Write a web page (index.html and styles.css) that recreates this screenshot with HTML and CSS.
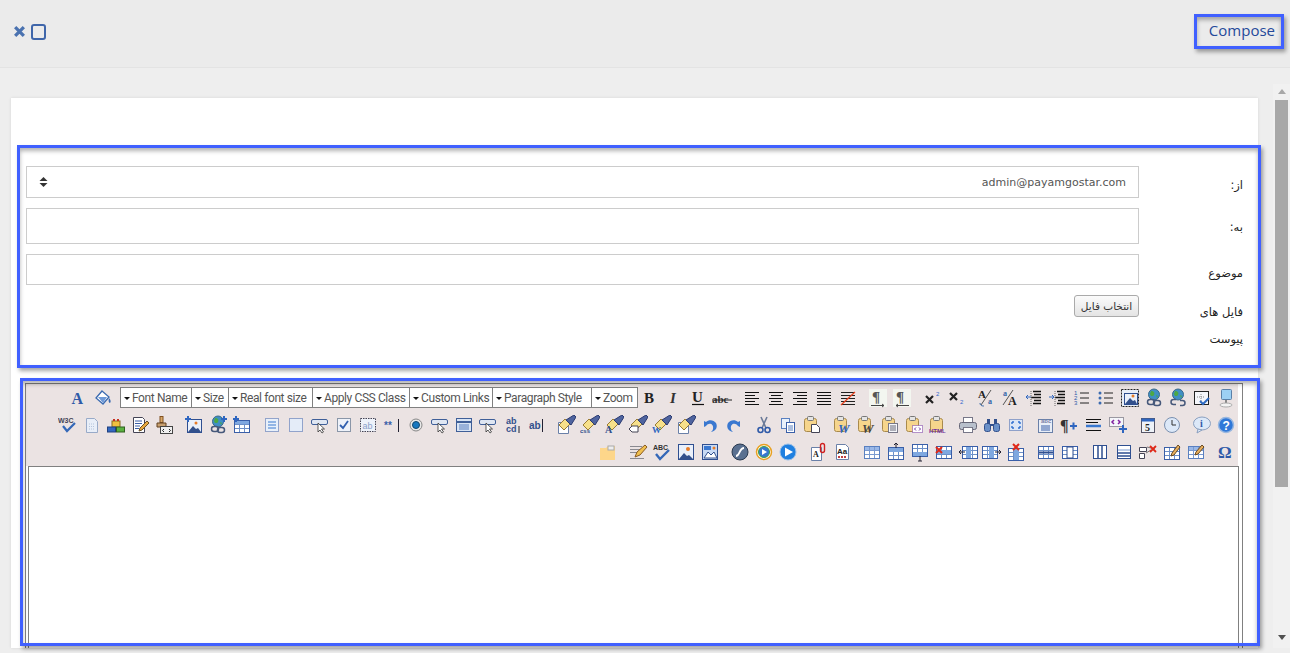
FILE: index.html
```html
<!DOCTYPE html>
<html>
  <head>
    <meta charset="UTF-8" />
    <title>Compose</title>
    <link rel="stylesheet" href="styles.css">
  </head>
  <body>
    <svg class="sprite" xmlns="http://www.w3.org/2000/svg">
      <defs>
        <g id="brush"><path d="M2 11l6-6 5 5-6 6z" fill="#f7e08a" stroke="#9a7c34"/><path d="M9 6l8-5 2 2-5 8z" fill="#4f649f" stroke="#2a3a70"/></g>
        <g id="clip"><rect x="2.5" y="3.5" width="12" height="13" rx="2" fill="#f6d58c" stroke="#a98a4c"/><rect x="5.5" y="1.5" width="6" height="4" rx="1" fill="#e4e4e4" stroke="#777"/></g>
        <g id="page"><path d="M4.5 2.5h8l3 3v12h-11z" fill="#f2f6fc" stroke="#8aa0c8"/><path d="M7 8h6M7 10.5h6M7 13h6" stroke="#a8bcdc"/></g>
        <g id="grid"><rect x="2.5" y="4.5" width="15" height="12" fill="#fff" stroke="#3a5fa8"/><path d="M3 8.5h14M3 12.5h14M7.5 5v11M12.5 5v11" stroke="#6d90c8"/></g>
        <g id="globe"><circle cx="9" cy="6.5" r="5.5" fill="#3f8fc4" stroke="#3a6a8c"/><path d="M6 3c3 0 4 2 3 4s-4 1-4-1M11 7l2 1-1 2z" fill="#4da844"/></g>
        <g id="cursor"><path d="M10 8v9l2-2 2 3 1.5-1-2-3h3z" fill="#fff" stroke="#333" stroke-width=".8"/></g>
        <g id="btn"><rect x="1.5" y="4.5" width="16" height="5" rx="1.5" fill="#dfe6f2" stroke="#3f5f98"/><use href="#cursor" x="-2" y="0"/></g>
        <symbol id="font" viewBox="0 0 20 20"><text x="2.500" y="16" class="t-serif t-16" fill="#2f5aa8">A</text></symbol>
        <symbol id="bucket" viewBox="0 0 20 20"><path d="M9 3l7 6-6 7-7-6z" fill="#fff" stroke="#3a6ab0" stroke-width="1.3"/><path d="M5 9h9l-4 6z" fill="#6f9ad8"/><path d="M16 10c2 2 2 4 1 5-1 0-2-2-1-5z" fill="#3a6ab0"/></symbol>
        <symbol id="bold" viewBox="0 0 20 20"><text x="4" y="15" class="t-serif t-15" fill="#222">B</text></symbol>
        <symbol id="italic" viewBox="0 0 20 20"><text x="6" y="15" class="t-serif t-15 t-it" fill="#333">I</text></symbol>
        <symbol id="under" viewBox="0 0 20 20"><text x="4" y="14" class="t-serif t-15" fill="#222">U</text><path d="M4 16.5h12" stroke="#111" stroke-width="1.2"/></symbol>
        <symbol id="strike" viewBox="0 0 20 20"><text x="0" y="15" class="t-serif t-11" fill="#333">abc</text><path d="M0 12h20" stroke="#222"/></symbol>
        <symbol id="aleft" viewBox="0 0 20 20"><path d="M3 4.5h14M3 7.5h10M3 10.5h14M3 13.5h10M3 16.5h14" stroke="#111"/></symbol>
        <symbol id="acenter" viewBox="0 0 20 20"><path d="M3 4.5h14M5 7.5h10M3 10.5h14M5 13.5h10M3 16.5h14" stroke="#111"/></symbol>
        <symbol id="aright" viewBox="0 0 20 20"><path d="M3 4.5h14M7 7.5h10M3 10.5h14M7 13.5h10M3 16.5h14" stroke="#111"/></symbol>
        <symbol id="ajust" viewBox="0 0 20 20"><path d="M3 4.5h14M3 7.5h14M3 10.5h14M3 13.5h14M3 16.5h14" stroke="#111"/></symbol>
        <symbol id="anone" viewBox="0 0 20 20"><path d="M3 4.5h14M3 7.5h14M3 10.5h14M3 13.5h14M3 16.5h14" stroke="#222"/><path d="M3 17L17 4" stroke="#e8401c" stroke-width="1.2"/></symbol>
        <symbol id="pil-l" viewBox="0 0 20 20"><rect x="1" y="1" width="18" height="18" fill="#f3f6f0"/><text x="4" y="14" class="t-serif t-15" fill="#555">¶</text><path d="M3 17.5h13M14 16l2 1.5-2 1.500" stroke="#444" fill="none"/></symbol>
        <symbol id="pil-r" viewBox="0 0 20 20"><rect x="1" y="1" width="18" height="18" fill="#f3f6f0"/><text x="4" y="14" class="t-serif t-15" fill="#555">¶</text><path d="M4 17.5h13M6 16l-2 1.5 2 1.500" stroke="#444" fill="none"/></symbol>
        <symbol id="sup" viewBox="0 0 20 20"><path d="M4 8l7 7M11 8l-7 7" stroke="#222" stroke-width="2.2"/><text x="14" y="8" class="t-sans t-6" fill="#36c">2</text></symbol>
        <symbol id="sub" viewBox="0 0 20 20"><path d="M4 5l7 7M11 5l-7 7" stroke="#222" stroke-width="2.2"/><text x="14" y="16" class="t-sans t-6" fill="#36c">2</text></symbol>
        <symbol id="fdown" viewBox="0 0 20 20"><text x="2" y="10" class="t-serif t-11" fill="#222">A</text><path d="M15 2L5 17" stroke="#555"/><text x="12" y="16" class="t-serif t-8" fill="#36a">a</text><path d="M4 15c0 3 3 3 4 3" stroke="#36a" fill="none"/></symbol>
        <symbol id="fup" viewBox="0 0 20 20"><text x="3" y="8" class="t-serif t-8" fill="#36a">a</text><path d="M13 2L3 17" stroke="#555"/><text x="8" y="17" class="t-serif t-12" fill="#222">A</text></symbol>
        <symbol id="outd" viewBox="0 0 20 20"><path d="M9 3.500h8M10 6.500h7M7 9.500h10M10 12.500h7M9 15.500h8" stroke="#111" stroke-width="1.5"/><path d="M2 9h5M4 7L2 9l2 2" stroke="#2f66c0" fill="none"/><path d="M7 3v15" stroke="#666" stroke-dasharray="1 1"/></symbol>
        <symbol id="ind" viewBox="0 0 20 20"><path d="M9 3.500h8M10 6.500h7M7 9.500h10M10 12.500h7M9 15.500h8" stroke="#111" stroke-width="1.5"/><path d="M1 9h5M4 7l2 2-2 2" stroke="#2f66c0" fill="none"/><path d="M7 3v15" stroke="#666" stroke-dasharray="1 1"/></symbol>
        <symbol id="ol" viewBox="0 0 20 20"><text x="2" y="7" class="t-sans t-6" fill="#2f5aa8">1</text><text x="2" y="12" class="t-sans t-6" fill="#2f5aa8">2</text><text x="2" y="17" class="t-sans t-6" fill="#2f5aa8">3</text><path d="M8 5h9M8 10h9M8 15h9" stroke="#222"/></symbol>
        <symbol id="ul" viewBox="0 0 20 20"><circle cx="4" cy="5" r="1.5" fill="#3a6ab0"/><circle cx="4" cy="10" r="1.5" fill="#3a6ab0"/><circle cx="4" cy="15" r="1.5" fill="#3a6ab0"/><path d="M8 5h9M8 10h9M8 15h9" stroke="#222"/></symbol>
        <symbol id="imgf" viewBox="0 0 20 20"><rect x="1.5" y="1.5" width="17" height="17" fill="#e8eef8" stroke="#222" stroke-dasharray="2 1"/><rect x="4.5" y="5.5" width="13" height="11" fill="#eaf0fa" stroke="#2f4f90"/><circle cx="13" cy="8" r="1.5" fill="#e87c28"/><path d="M5 16l5-6 3 3 2-1 2 4z" fill="#32508c"/></symbol>
        <symbol id="link" viewBox="0 0 20 20"><use href="#globe" x="1"/><rect x="3.5" y="11.5" width="7" height="5" rx="2.5" fill="none" stroke="#46587a" stroke-width="1.5"/><rect x="9.5" y="12.5" width="7" height="5" rx="2.5" fill="none" stroke="#46587a" stroke-width="1.5"/></symbol>
        <symbol id="unlink" viewBox="0 0 20 20"><use href="#globe" x="1"/><path d="M8 16.5H5.5a2.5 2.5 0 0 1 0-5H8M12 12.5h2.5a2.5 2.5 0 0 1 0 5H12" fill="none" stroke="#46587a" stroke-width="1.5"/></symbol>
        <symbol id="selall" viewBox="0 0 20 20"><rect x="2.5" y="3.5" width="14" height="13" fill="#f4f6fa" stroke="#222"/><path d="M5 9h8M9 6v8" stroke="#888" stroke-dasharray="1 1"/><path d="M8 13l3 3 6-6" stroke="#2f6ac0" stroke-width="2" fill="none"/></symbol>
        <symbol id="screen" viewBox="0 0 20 20"><rect x="5.5" y="1.5" width="10" height="10" rx="1" fill="#9cd0f4" stroke="#5a80a8"/><path d="M10 12v3" stroke="#888" stroke-width="2"/><ellipse cx="10" cy="17" rx="6" ry="2" fill="#f4f4f4" stroke="#aaa"/></symbol>
        <symbol id="w3c" viewBox="0 0 20 20"><text x="0" y="8" class="t-sans t-7 t-b" fill="#445">W3C</text><path d="M5 11l4 5 8-8" stroke="#3468b8" stroke-width="2.2" fill="none"/></symbol>
        <symbol id="newdoc" viewBox="0 0 20 20"><path d="M4.5 3.5h8l3 3v11h-11z" fill="#e8eef8" stroke="#98aac8"/><path d="M7 9h6M7 11.5h6M7 14h6" stroke="#b4c4dc" stroke-dasharray="1 1"/></symbol>
        <symbol id="lego" viewBox="0 0 20 20"><rect x="6" y="6" width="8" height="6" fill="#f0c040" stroke="#8a6a20"/><path d="M8 4v2M12 4v2" stroke="#c83020" stroke-width="2"/><rect x="1.5" y="12" width="8" height="5" fill="#3268c0" stroke="#204080"/><rect x="10.5" y="12" width="8" height="5" fill="#5ab040" stroke="#306020"/></symbol>
        <symbol id="editdoc" viewBox="0 0 20 20"><path d="M3.5 2.5h9l2 2v13h-11z" fill="#fff" stroke="#445"/><path d="M5 6h7M5 8.5h7M5 11h5M5 13.5h4" stroke="#3a5fa8"/><path d="M9 16l1-3 7-7 2 2-7 7z" fill="#e8a840" stroke="#6a5020"/></symbol>
        <symbol id="brushtag" viewBox="0 0 20 20"><rect x="6" y="1.5" width="3" height="6" fill="#d8a868" stroke="#805020"/><path d="M3 8h9v4H3z" fill="#c8a070" stroke="#604020"/><rect x="6.5" y="11.5" width="12" height="7" fill="#f0f0f0" stroke="#444"/><path d="M10 14l-1.5 1.5L10 17M15 14l1.5 1.5L15 17" stroke="#222" fill="none"/></symbol>
        <symbol id="imgplus" viewBox="0 0 20 20"><rect x="3.5" y="4.5" width="14" height="13" fill="#eaf0fa" stroke="#2f4f90"/><circle cx="12" cy="8" r="1.5" fill="#e87c28"/><path d="M4 17l5-6 3 3 2-1 3 4z" fill="#32508c"/><path d="M1 4h6M4 1v6" stroke="#2f66c0" stroke-width="2"/></symbol>
        <symbol id="linkplus" viewBox="0 0 20 20"><use href="#link"/><path d="M13 4h6M16 1v6" stroke="#2f66c0" stroke-width="2"/></symbol>
        <symbol id="tblplus" viewBox="0 0 20 20"><use href="#grid" y="1"/><rect x="3" y="6" width="14" height="3" fill="#7fa8e0"/><path d="M1 4h6M4 1v6" stroke="#2f66c0" stroke-width="2"/></symbol>
        <symbol id="fdiv" viewBox="0 0 20 20"><rect x="3.5" y="3.5" width="13" height="13" fill="#e8f0fa" stroke="#3a5fa8" stroke-dasharray="1 1"/><path d="M6 7h8M6 10h8M6 13h8" stroke="#3a7ad0"/></symbol>
        <symbol id="fbox" viewBox="0 0 20 20"><rect x="3.5" y="3.5" width="13" height="13" fill="#e4ecf8" stroke="#3a5fa8" stroke-dasharray="1 1"/></symbol>
        <symbol id="fbtn" viewBox="0 0 20 20"><use href="#btn"/></symbol>
        <symbol id="fcheck" viewBox="0 0 20 20"><rect x="3.5" y="3.5" width="13" height="13" fill="#eef2fa" stroke="#8a96a8"/><path d="M6 10l3 3 5-7" stroke="#3260b0" stroke-width="1.8" fill="none"/></symbol>
        <symbol id="fab" viewBox="0 0 20 20"><rect x="2.5" y="3.5" width="15" height="13" fill="#eef2fa" stroke="#445" stroke-dasharray="1.5 1"/><text x="4.5" y="14" class="t-sans t-9" fill="#8aa0c8">ab</text></symbol>
        <symbol id="fpass" viewBox="0 0 20 20"><text x="2" y="14" class="t-sans t-10 t-b" fill="#3a5fa8">**</text><path d="M16.5 4v13" stroke="#223"/></symbol>
        <symbol id="radio" viewBox="0 0 20 20"><circle cx="10" cy="10" r="6" fill="#e8e8e8" stroke="#888"/><circle cx="10" cy="10" r="3.5" fill="#1878c0" stroke="#104870"/></symbol>
        <symbol id="flist" viewBox="0 0 20 20"><rect x="2.5" y="3.5" width="15" height="13" fill="#d8e4f4" stroke="#3f5f98"/><path d="M3 7h14" stroke="#3f5f98" stroke-width="2"/><path d="M5 10h10M5 12h10M5 14h10" stroke="#5a80c0"/></symbol>
        <symbol id="tarea" viewBox="0 0 20 20"><text x="4" y="9" class="t-sans t-9 t-b" fill="#32508c">ab</text><text x="4" y="17" class="t-sans t-9 t-b" fill="#32508c">cd</text><path d="M17 11v7" stroke="#223"/></symbol>
        <symbol id="tinput" viewBox="0 0 20 20"><text x="3" y="14" class="t-sans t-10 t-b" fill="#32508c">ab</text><path d="M16.5 4v13" stroke="#223"/></symbol>
        <symbol id="brdoc" viewBox="0 0 20 20"><path d="M2.5 7.5h10v11h-10z" fill="#fff" stroke="#6a80a8"/><use href="#brush" x="1" y="-1"/></symbol>
        <symbol id="brcss" viewBox="0 0 20 20"><use href="#brush" x="1" y="-1"/><text x="0" y="18" class="t-sans t-6 t-b" fill="#32508c">css</text></symbol>
        <symbol id="bra" viewBox="0 0 20 20"><use href="#brush" x="1" y="-1"/><text x="1" y="18" class="t-serif t-10" fill="#32508c">A</text></symbol>
        <symbol id="brs" viewBox="0 0 20 20"><use href="#brush" x="1" y="-1"/><path d="M1 14l3-3h6v6H4z" fill="#fff" stroke="#445"/></symbol>
        <symbol id="brw" viewBox="0 0 20 20"><use href="#brush" x="1" y="-1"/><text x="0" y="18" class="t-serif t-9 t-b" fill="#2f66c0">W</text></symbol>
        <symbol id="undo" viewBox="0 0 20 20"><path d="M4 6v6l2-1c3-4 8-2 7 3-.3 1.5-1 2-2 3 5-1 7-5 5-9-2-3-7-4-10-1z" fill="#3a78d0"/></symbol>
        <symbol id="redo" viewBox="0 0 20 20"><path d="M16 6v6l-2-1c-3-4-8-2-7 3 .3 1.5 1 2 2 3-5-1-7-5-5-9 2-3 7-4 10-1z" fill="#3a78d0"/></symbol>
        <symbol id="cut" viewBox="0 0 20 20"><path d="M7 2l5 11M13 2L8 13" stroke="#6a7a98" stroke-width="1.6"/><circle cx="6.5" cy="15" r="2.5" fill="none" stroke="#2f5aa8" stroke-width="1.6"/><circle cx="13.5" cy="15" r="2.5" fill="none" stroke="#2f5aa8" stroke-width="1.6"/></symbol>
        <symbol id="copy" viewBox="0 0 20 20"><rect x="3.5" y="3.5" width="8" height="10" fill="#e8f0fa" stroke="#5a80c0"/><rect x="8.5" y="7.5" width="8" height="10" fill="#fff" stroke="#3a5fa8"/><path d="M10 11h5M10 13h5M10 15h5" stroke="#5a80c0"/></symbol>
        <symbol id="paste" viewBox="0 0 20 20"><use href="#clip"/><path d="M9.5 9.5h5l3 3v5h-8z" fill="#fff" stroke="#445"/></symbol>
        <symbol id="pastew" viewBox="0 0 20 20"><use href="#clip"/><text x="6" y="18" class="t-serif t-13 t-it" fill="#2f66c0">W</text></symbol>
        <symbol id="pastewg" viewBox="0 0 20 20"><use href="#clip"/><text x="6" y="18" class="t-serif t-13 t-it" fill="#444">W</text></symbol>
        <symbol id="pastet" viewBox="0 0 20 20"><use href="#clip"/><rect x="8.5" y="8.5" width="9" height="9" fill="#f4f6fa" stroke="#778"/><path d="M10 11h6M10 13h6M10 15h6" stroke="#667"/></symbol>
        <symbol id="pastec" viewBox="0 0 20 20"><use href="#clip"/><rect x="8.5" y="10.5" width="10" height="7" fill="#fff" stroke="#7030a0" stroke-dasharray="1 1"/><path d="M12 12.5l-1.5 1.5 1.5 1.5M15 12.5l1.5 1.5-1.5 1.5" stroke="#7030a0" fill="none"/></symbol>
        <symbol id="pasteh" viewBox="0 0 20 20"><use href="#clip"/><text x="1" y="18" class="t-sans t-6 t-b" fill="#7030a0">HTML</text></symbol>
        <symbol id="print" viewBox="0 0 20 20"><rect x="5.5" y="2.5" width="9" height="6" fill="#fff" stroke="#778"/><rect x="1.5" y="7.5" width="17" height="7" rx="2" fill="#b8c0cc" stroke="#667"/><rect x="5.5" y="12.5" width="9" height="5" fill="#fff" stroke="#778"/></symbol>
        <symbol id="find" viewBox="0 0 20 20"><rect x="2.5" y="8.5" width="6" height="8" rx="2" fill="#6a90c8" stroke="#32508c"/><rect x="11.5" y="8.5" width="6" height="8" rx="2" fill="#6a90c8" stroke="#32508c"/><path d="M5 4h3v5H5zM12 4h3v5h-3z" fill="#32508c"/><path d="M8 10h4" stroke="#32508c" stroke-width="2"/></symbol>
        <symbol id="full" viewBox="0 0 20 20"><rect x="3.5" y="4.5" width="13" height="11" fill="#dce6f6" stroke="#3a5fa8" stroke-dasharray="1 1"/><path d="M6 7h2M6 7v2M14 7h-2M14 7v2M6 13h2M6 13v-2M14 13h-2M14 13v-2" stroke="#3070d0" stroke-width="1.4"/></symbol>
        <symbol id="note" viewBox="0 0 20 20"><rect x="2.5" y="4.5" width="14" height="13" fill="#e8eef8" stroke="#6a80a8"/><text x="5" y="8" class="t-sans t-6 t-b" fill="#7a80a8">abc</text><path d="M5 11h9M5 13h9M5 15h9" stroke="#3a5fa8"/></symbol>
        <symbol id="pilplus" viewBox="0 0 20 20"><text x="0" y="16" class="t-serif t-16 t-b" fill="#333">¶</text><path d="M10 11h7M13.5 7.5v7" stroke="#2f66c0" stroke-width="2"/></symbol>
        <symbol id="hrule" viewBox="0 0 20 20"><path d="M2 4.5h15M2 7.5h12M2 15.5h15" stroke="#111"/><path d="M2 11h15" stroke="#3a78d0" stroke-width="2.5"/></symbol>
        <symbol id="inscode" viewBox="0 0 20 20"><rect x="1.5" y="2.5" width="14" height="9" fill="#f4f6fa" stroke="#445" stroke-dasharray="1 1"/><path d="M6 5L4 7l2 2M10 5l2 2-2 2" stroke="#8020a0" stroke-width="1.5" fill="none"/><path d="M11 14h8M15 10v8" stroke="#2f66c0" stroke-width="2"/></symbol>
        <symbol id="cal" viewBox="0 0 20 20"><rect x="3.5" y="3.5" width="13" height="14" fill="#eef2f8" stroke="#556"/><rect x="3.5" y="3.5" width="13" height="3" fill="#2f66c0"/><text x="7" y="16" class="t-serif t-10 t-b" fill="#222">5</text></symbol>
        <symbol id="clock" viewBox="0 0 20 20"><circle cx="10" cy="10" r="7.5" fill="#dce8f8" stroke="#7a90b0"/><path d="M10 5v5h4" stroke="#333" fill="none"/></symbol>
        <symbol id="info" viewBox="0 0 20 20"><ellipse cx="10" cy="8.5" rx="8.5" ry="6.5" fill="#dce8f8" stroke="#8aa0c0"/><path d="M6 14l-1 4 5-3z" fill="#dce8f8" stroke="#8aa0c0"/><text x="8" y="12" class="t-serif t-10 t-b" fill="#2f5aa8">i</text></symbol>
        <symbol id="help" viewBox="0 0 20 20"><circle cx="10" cy="10" r="7.5" fill="#2f78d8" stroke="#9ab8e0" stroke-width="1.5"/><text x="6.5" y="14.5" class="t-sans t-12 t-b" fill="#fff">?</text></symbol>
        <symbol id="folder" viewBox="0 0 20 20"><path d="M2 6h6l2-2h7v14H2z" fill="#fdd68a"/><rect x="10" y="4" width="6" height="4" fill="#eee" stroke="#aaa"/></symbol>
        <symbol id="sign" viewBox="0 0 20 20"><path d="M2 4.5h12M2 7.5h10M2 10.5h8M2 16.5h14" stroke="#8a8a90"/><path d="M7 15l2-5 8-7 2 2-7 8z" fill="#f0c050" stroke="#8a5a20"/></symbol>
        <symbol id="spell" viewBox="0 0 20 20"><text x="1" y="8" class="t-sans t-7 t-b" fill="#333">ABC</text><path d="M4 12l4 5 9-9" stroke="#3468b8" stroke-width="2.4" fill="none"/></symbol>
        <symbol id="image" viewBox="0 0 20 20"><rect x="2.5" y="2.5" width="15" height="15" fill="#eaf0fa" stroke="#2f4f90"/><circle cx="12" cy="7" r="2" fill="#e87c28"/><path d="M3 17l5-6 3 3 2-1 4 4z" fill="#32508c"/></symbol>
        <symbol id="gallery" viewBox="0 0 20 20"><rect x="2.5" y="2.5" width="15" height="15" fill="#c8daf4" stroke="#2f4f90"/><rect x="4" y="4" width="7" height="4" fill="#3a78d0"/><circle cx="14" cy="6" r="1.5" fill="#e87c28"/><path d="M4 16l4-6 3 3 3-3 3 6z" fill="#fff" stroke="#32508c"/></symbol>
        <symbol id="flash" viewBox="0 0 20 20"><circle cx="10" cy="10" r="8" fill="#5a7090" stroke="#2a3a50"/><path d="M6 14c4 0 3-8 8-8" stroke="#fff" stroke-width="1.8" fill="none"/></symbol>
        <symbol id="wmp" viewBox="0 0 20 20"><circle cx="10" cy="10" r="7.5" fill="#fff" stroke="#e8a020" stroke-width="1.5"/><circle cx="10" cy="10" r="5.5" fill="#3878d0" stroke="#40a040"/><path d="M8 7l5 3-5 3z" fill="#fff"/></symbol>
        <symbol id="play" viewBox="0 0 20 20"><circle cx="10" cy="10" r="8" fill="#2080e0" stroke="#9ac0e8"/><path d="M7 5.5l8 4.5-8 4.500z" fill="#fff"/></symbol>
        <symbol id="docclip" viewBox="0 0 20 20"><path d="M3.5 5.5h10v13h-10z" fill="#fff" stroke="#6a80a8"/><text x="5" y="15" class="t-serif t-8 t-b" fill="#222">A</text><rect x="12.5" y="1.5" width="4" height="9" rx="2" fill="none" stroke="#d02020" stroke-width="1.4"/></symbol>
        <symbol id="docaa" viewBox="0 0 20 20"><path d="M4.5 2.5h9l3 3v12h-12z" fill="#fff" stroke="#6a80a8"/><text x="5" y="12" class="t-sans t-8 t-b" fill="#222">Aa</text><path d="M6 15h2M9 15h2M12 15h2" stroke="#c04040" stroke-width="2"/></symbol>
        <symbol id="tbl" viewBox="0 0 20 20"><rect x="2.5" y="4.5" width="15" height="12" fill="#fff" stroke="#5a80c0"/><rect x="3" y="5" width="14" height="3" fill="#9ab8e8"/><path d="M3 8.5h14M3 12.5h14M7.5 5v11M12.5 5v11" stroke="#7a9ad0"/></symbol>
        <symbol id="rabove" viewBox="0 0 20 20"><use href="#grid" y="1"/><rect x="3" y="6" width="14" height="4" fill="#7fa8e0"/><path d="M10 6V1M8 3l2-2 2 2" stroke="#223" fill="none"/></symbol>
        <symbol id="rbelow" viewBox="0 0 20 20"><use href="#grid" y="-2"/><rect x="3" y="10" width="14" height="4" fill="#7fa8e0"/><path d="M10 14v5M8 19h4" stroke="#223" fill="none"/></symbol>
        <symbol id="rdel" viewBox="0 0 20 20"><use href="#grid"/><rect x="3" y="8" width="14" height="4" fill="#7fa8e0"/><path d="M2 5l6 6M8 5l-6 6" stroke="#e02818" stroke-width="2"/></symbol>
        <symbol id="cleft" viewBox="0 0 20 20"><use href="#grid" x="2"/><rect x="8" y="5" width="5" height="11" fill="#7fa8e0"/><path d="M1 10h6M3 8l-2 2 2 2" stroke="#223" fill="none"/></symbol>
        <symbol id="cright" viewBox="0 0 20 20"><use href="#grid" x="-2"/><rect x="7" y="5" width="5" height="11" fill="#7fa8e0"/><path d="M13 10h6M17 8l2 2-2 2" stroke="#223" fill="none"/></symbol>
        <symbol id="cdel" viewBox="0 0 20 20"><use href="#grid" y="2"/><rect x="8" y="7" width="5" height="11" fill="#7fa8e0"/><path d="M7 2l6 6M13 2L7 8" stroke="#e02818" stroke-width="2"/></symbol>
        <symbol id="srow" viewBox="0 0 20 20"><use href="#grid"/><path d="M3 10.5h14" stroke="#2f4f90" stroke-width="2"/></symbol>
        <symbol id="scol" viewBox="0 0 20 20"><use href="#grid"/><rect x="7" y="5" width="6" height="11" fill="#fff" stroke="#2f4f90"/></symbol>
        <symbol id="cols" viewBox="0 0 20 20"><rect x="3.5" y="3.5" width="13" height="13" fill="#fff" stroke="#2f4f90"/><path d="M8 4v12M12 4v12" stroke="#2f4f90" stroke-width="1.5"/></symbol>
        <symbol id="rows" viewBox="0 0 20 20"><rect x="3.5" y="3.5" width="13" height="13" fill="#fff" stroke="#2f4f90"/><path d="M4 8h12" stroke="#7a9ad0"/><path d="M4 11h12M4 14h12" stroke="#2f4f90" stroke-width="1.5"/></symbol>
        <symbol id="cellx" viewBox="0 0 20 20"><path d="M1.5 5.5h7v4h-7zM1.5 11.5h5v5h-5z" fill="#fff" stroke="#445"/><path d="M9 5l8 2M8 11l5-3" stroke="#777"/><path d="M12 4l6 6M18 4l-6 6" stroke="#e02818" stroke-width="1.8"/></symbol>
        <symbol id="tpen" viewBox="0 0 20 20"><use href="#grid" y="1"/><path d="M9 14l1-3 6-8 2 2-6 8z" fill="#e8b060" stroke="#6a4a20"/></symbol>
        <symbol id="tpen2" viewBox="0 0 20 20"><use href="#tbl" width="20" height="20"/><path d="M9 13l1-3 6-7 2 2-6 7z" fill="#e8b060" stroke="#6a4a20"/></symbol>
        <symbol id="omega" viewBox="0 0 20 20"><text x="2" y="16" class="t-serif t-17 t-b" fill="#2f5aa8">Ω</text></symbol>
      </defs>
    </svg>

    <header class="topbar">
      <div class="win-btns">
        <svg class="ic-x" viewBox="0 0 12 12"><path d="M2 2l8 8M10 2l-8 8" stroke="#4a72b0" stroke-width="3"/></svg>
        <span class="ic-sq"></span>
      </div>
      <a class="title">Compose</a>
    </header>

    <div class="main">
      <div class="card">
        <form class="mail-form" dir="rtl">
          <label class="lbl">از:</label>
          <div class="field sel"><span>admin@payamgostar.com</span><svg class="updown" viewBox="0 0 9 10"><path d="M4.5 0L8.5 4H.5zM4.5 10L.5 6h8z" fill="#333"/></svg></div>
          <label class="lbl">به:</label>
          <div class="field to"></div>
          <label class="lbl">موضوع</label>
          <div class="field subject"></div>
          <label class="lbl lbl-files">فایل های<br>پیوست</label>
          <div><button type="button" class="file-btn">انتخاب فایل</button></div>
        </form>

        <div class="editor">
          <div class="toolbar">
            <div class="row">
              <div class="grp"><svg class="ic"><use href="#font"/></svg><svg class="ic"><use href="#bucket"/></svg></div>
              <div class="grp">
                <span class="dd w-font">Font Name</span><span class="dd w-size">Size</span><span class="dd w-real">Real font size</span><span class="dd w-css">Apply CSS Class</span><span class="dd w-links">Custom Links</span><span class="dd w-para">Paragraph Style</span><span class="dd w-zoom">Zoom</span>
              </div>
              <div class="grp nogap"><svg class="ic"><use href="#bold"/></svg><svg class="ic"><use href="#italic"/></svg><svg class="ic"><use href="#under"/></svg><svg class="ic"><use href="#strike"/></svg></div>
              <div class="grp"><svg class="ic"><use href="#aleft"/></svg><svg class="ic"><use href="#acenter"/></svg><svg class="ic"><use href="#aright"/></svg><svg class="ic"><use href="#ajust"/></svg><svg class="ic"><use href="#anone"/></svg></div>
              <div class="grp"><svg class="ic"><use href="#pil-l"/></svg><svg class="ic"><use href="#pil-r"/></svg></div>
              <div class="grp"><svg class="ic"><use href="#sup"/></svg><svg class="ic"><use href="#sub"/></svg></div>
              <div class="grp"><svg class="ic"><use href="#fdown"/></svg><svg class="ic"><use href="#fup"/></svg><svg class="ic"><use href="#outd"/></svg><svg class="ic"><use href="#ind"/></svg><svg class="ic"><use href="#ol"/></svg><svg class="ic"><use href="#ul"/></svg><svg class="ic"><use href="#imgf"/></svg><svg class="ic"><use href="#link"/></svg><svg class="ic"><use href="#unlink"/></svg><svg class="ic"><use href="#selall"/></svg><svg class="ic"><use href="#screen"/></svg></div>
            </div>
            <div class="row">
              <div class="grp"><svg class="ic"><use href="#w3c"/></svg><svg class="ic"><use href="#newdoc"/></svg><svg class="ic"><use href="#lego"/></svg><svg class="ic"><use href="#editdoc"/></svg><svg class="ic"><use href="#brushtag"/></svg></div>
              <div class="grp"><svg class="ic"><use href="#imgplus"/></svg><svg class="ic"><use href="#linkplus"/></svg><svg class="ic"><use href="#tblplus"/></svg></div>
              <div class="grp"><svg class="ic"><use href="#fdiv"/></svg><svg class="ic"><use href="#fbox"/></svg><svg class="ic"><use href="#fbtn"/></svg><svg class="ic"><use href="#fcheck"/></svg><svg class="ic"><use href="#fab"/></svg><svg class="ic"><use href="#fpass"/></svg><svg class="ic"><use href="#radio"/></svg><svg class="ic"><use href="#fbtn"/></svg><svg class="ic"><use href="#flist"/></svg><svg class="ic"><use href="#fbtn"/></svg><svg class="ic"><use href="#tarea"/></svg><svg class="ic"><use href="#tinput"/></svg></div>
              <div class="grp"><svg class="ic"><use href="#brdoc"/></svg><svg class="ic"><use href="#brcss"/></svg><svg class="ic"><use href="#bra"/></svg><svg class="ic"><use href="#brs"/></svg><svg class="ic"><use href="#brw"/></svg><svg class="ic"><use href="#brdoc"/></svg><svg class="ic"><use href="#undo"/></svg><svg class="ic"><use href="#redo"/></svg></div>
              <div class="grp"><svg class="ic"><use href="#cut"/></svg><svg class="ic"><use href="#copy"/></svg><svg class="ic"><use href="#paste"/></svg></div>
              <div class="grp"><svg class="ic"><use href="#pastew"/></svg><svg class="ic"><use href="#pastewg"/></svg><svg class="ic"><use href="#pastet"/></svg><svg class="ic"><use href="#pastec"/></svg><svg class="ic"><use href="#pasteh"/></svg></div>
              <div class="grp"><svg class="ic"><use href="#print"/></svg><svg class="ic"><use href="#find"/></svg><svg class="ic"><use href="#full"/></svg></div>
              <div class="grp"><svg class="ic"><use href="#note"/></svg><svg class="ic"><use href="#pilplus"/></svg><svg class="ic"><use href="#hrule"/></svg><svg class="ic"><use href="#inscode"/></svg></div>
              <div class="grp"><svg class="ic"><use href="#cal"/></svg><svg class="ic"><use href="#clock"/></svg></div>
              <div class="grp"><svg class="ic"><use href="#info"/></svg><svg class="ic"><use href="#help"/></svg></div>
            </div>
            <div class="row">
              <div class="grp"><svg class="ic"><use href="#folder"/></svg></div>
              <div class="grp"><svg class="ic"><use href="#sign"/></svg><svg class="ic"><use href="#spell"/></svg><svg class="ic"><use href="#image"/></svg><svg class="ic"><use href="#gallery"/></svg></div>
              <div class="grp"><svg class="ic"><use href="#flash"/></svg><svg class="ic"><use href="#wmp"/></svg><svg class="ic"><use href="#play"/></svg></div>
              <div class="grp"><svg class="ic"><use href="#docclip"/></svg><svg class="ic"><use href="#docaa"/></svg></div>
              <div class="grp"><svg class="ic"><use href="#tbl"/></svg><svg class="ic"><use href="#rabove"/></svg><svg class="ic"><use href="#rbelow"/></svg><svg class="ic"><use href="#rdel"/></svg><svg class="ic"><use href="#cleft"/></svg><svg class="ic"><use href="#cright"/></svg><svg class="ic"><use href="#cdel"/></svg></div>
              <div class="grp"><svg class="ic"><use href="#srow"/></svg><svg class="ic"><use href="#scol"/></svg></div>
              <div class="grp"><svg class="ic"><use href="#cols"/></svg><svg class="ic"><use href="#rows"/></svg><svg class="ic"><use href="#cellx"/></svg><svg class="ic"><use href="#tpen"/></svg><svg class="ic"><use href="#tpen2"/></svg></div>
              <div class="grp"><svg class="ic"><use href="#omega"/></svg></div>
            </div>
          </div>
          <div class="textarea"></div>
        </div>
      </div>

      <div class="scrollbar">
        <span class="arrow up"></span>
        <span class="thumb"></span>
        <span class="arrow down"></span>
      </div>
    </div>

    <!-- highlight frames drawn on top of the screenshot -->
    <div class="frame frame-title"></div>
    <div class="frame frame-form"></div>
    <div class="frame frame-editor"></div>
  </body>
</html>
```

FILE: styles.css
```css
html, body {
   margin: 0;
   padding: 0;
   height: 653px;
   overflow: hidden;
}
body {
   position: relative;
   background-color: #eeeeee;
   font-family: "DejaVu Sans", sans-serif;
   color: #333;
}
.sprite {
   position: absolute;
   width: 0;
   height: 0;
}

/* top bar */
.topbar {
   box-sizing: border-box;
   display: flex;
   align-items: center;
   justify-content: space-between;
   height: 68px;
   padding: 0 15px 8px 13px;
   background-color: #ebebeb;
   border-bottom: 1px solid #e3e3e3;
}
.win-btns {
   display: flex;
   align-items: center;
   gap: 5px;
   margin-top: 4px;
}
.ic-x {
   width: 13px;
   height: 13px;
}
.ic-sq {
   width: 11px;
   height: 12px;
   border: 2px solid #3f66aa;
   border-radius: 3px;
}
.title {
   font-family: "Open Sans", sans-serif;
   font-size: 15px;
   color: #24499a;
}

/* main area */
.main {
   display: flex;
   padding: 30px 0 0 11px;
}
.card {
   width: 1247px;
   height: 550px;
   overflow: hidden;
   background-color: #fff;
   box-shadow: 0 0 3px rgba(0, 0, 0, 0.1);
}
.scrollbar {
   display: flex;
   flex-direction: column;
   align-items: center;
   width: 17px;
   height: 564px;
   margin: -14px 0 0 15px;
   background-color: #f1f1f1;
}
.thumb {
   width: 13px;
   height: 387px;
   margin-top: 6px;
   background-color: #a8a8a8;
}
.arrow {
   width: 0;
   height: 0;
   border-left: 4px solid transparent;
   border-right: 4px solid transparent;
}
.arrow.up {
   margin-top: 5px;
   border-bottom: 5px solid #a8a8a8;
}
.arrow.down {
   margin-top: 148px;
   border-top: 5px solid #505050;
}

/* form */
.mail-form {
   display: grid;
   grid-template-columns: 104px 1113px;
   row-gap: 10px;
   padding: 68px 15px 0;
}
.lbl {
   padding-top: 10px;
   font-size: 11.5px;
   line-height: 18px;
   color: #222;
}
.lbl-files {
   padding-top: 4px;
   line-height: 27px;
}
.field {
   box-sizing: border-box;
   border: 1px solid #ccc;
   background-color: #fff;
}
.sel {
   display: flex;
   align-items: center;
   justify-content: space-between;
   height: 32px;
   padding: 0 12px;
   font-size: 11px;
   color: #555;
}
.updown {
   width: 9px;
   height: 10px;
}
.to {
   height: 36px;
}
.subject {
   height: 31px;
}
.file-btn {
   display: block;
   width: 65px;
   height: 22px;
   padding: 0;
   font-family: "DejaVu Sans", sans-serif;
   font-size: 10.5px;
   color: #333;
   border: 1px solid #aaa;
   border-radius: 3px;
   background: linear-gradient(#fbfbfb, #e4e4e4);
}

/* editor */
.editor {
   box-sizing: border-box;
   width: 1218px;
   margin: 30px 0 0 14px;
   border: 1px solid #808080;
   background-color: #fff;
}
.toolbar {
   margin-right: 4px;
   padding-bottom: 1px;
   background-color: #ebe3e3;
}
.row {
   display: flex;
   align-items: center;
   justify-content: flex-end;
   height: 27px;
}
.grp {
   display: flex;
   align-items: center;
   margin-left: 6px;
}
.grp.nogap {
   margin-left: 0;
}
.ic {
   width: 20px;
   height: 20px;
   padding: 0 2px;
   flex: none;
}
.dd {
   box-sizing: border-box;
   display: flex;
   align-items: center;
   height: 21px;
   padding-left: 3px;
   font-family: "Roboto", sans-serif;
   font-size: 12px;
   letter-spacing: -0.4px;
   color: #555;
   white-space: nowrap;
   background-color: #fff;
   border: 1px solid #808080;
   margin-left: -1px;
}
.dd:before {
   content: "";
   width: 0;
   height: 0;
   margin: 1px 2px 0 0;
   border-left: 3px solid transparent;
   border-right: 3px solid transparent;
   border-top: 3px solid #111;
}
.w-font { width: 72px; }
.w-size { width: 38px; }
.w-real { width: 85px; }
.w-css { width: 98px; }
.w-links { width: 84px; }
.w-para { width: 100px; }
.w-zoom { width: 47px; }

.textarea {
   box-sizing: border-box;
   width: 1211px;
   height: 300px;
   margin-left: 2px;
   border: 1px solid #808080;
   background-color: #fff;
}

/* text inside icons */
.t-serif { font-family: "Liberation Serif", serif; font-weight: bold; }
.t-sans { font-family: "Liberation Sans", sans-serif; }
.t-b { font-weight: bold; }
.t-it { font-style: italic; }
.t-6 { font-size: 6px; }
.t-7 { font-size: 7px; }
.t-8 { font-size: 8px; }
.t-9 { font-size: 9px; }
.t-10 { font-size: 10px; }
.t-11 { font-size: 11px; }
.t-12 { font-size: 12px; }
.t-13 { font-size: 13px; }
.t-14 { font-size: 14px; }
.t-15 { font-size: 15px; }
.t-16 { font-size: 16px; }
.t-17 { font-size: 17px; }

/* highlight frames */
.frame {
   position: absolute;
   box-sizing: border-box;
   border: 3px solid #4060ff;
   box-shadow: 2px 3px 4px rgba(0, 0, 0, 0.35), inset 0 3px 4px rgba(0, 0, 0, 0.3);
   pointer-events: none;
}
.frame-title {
   left: 1194px;
   top: 14px;
   width: 90px;
   height: 35px;
}
.frame-form {
   left: 17px;
   top: 145px;
   width: 1244px;
   height: 223px;
}
.frame-editor {
   left: 20px;
   top: 378px;
   width: 1240px;
   height: 268px;
}
```
